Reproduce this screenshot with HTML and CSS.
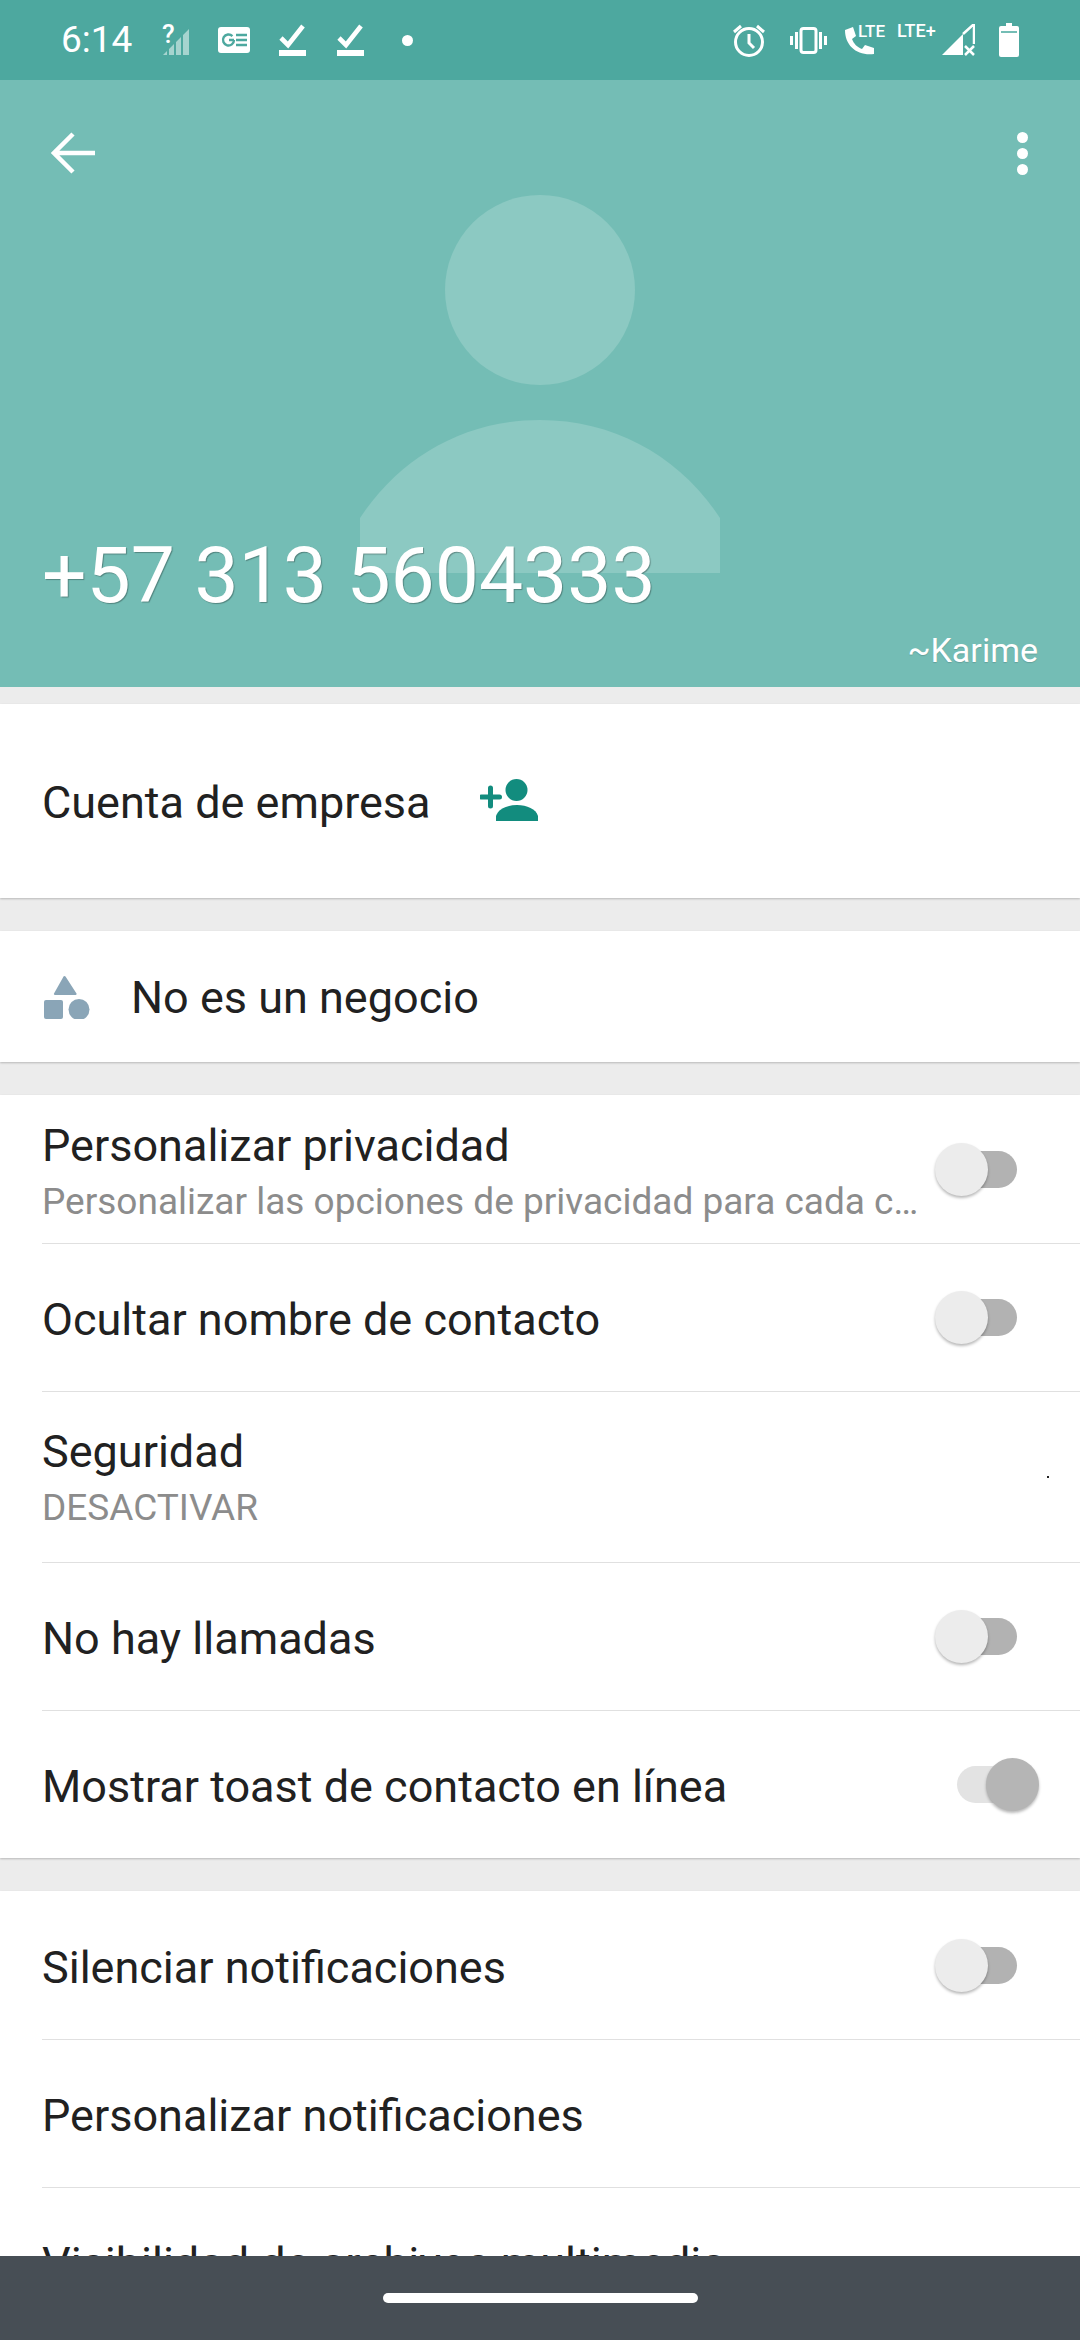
FILE: index.html
```html
<!DOCTYPE html>
<html lang="es">
<head>
<meta charset="utf-8">
<title>Info de contacto</title>
<link rel="stylesheet" href="styles.css">
</head>
<body>
<div class="screen">
  <div class="statusbar">
    <span class="time">6:14</span>
    <svg class="i-sig" viewBox="0 -6 30 38"><text class="q" x="0" y="19">?</text><path class="dim" d="M1 31l4-4v4zM7 31v-6l5-5v11zM14 31V18l5-5v18zM21 31V11l6-6v26z"/></svg>
    <svg class="i-news" viewBox="0 0 32 26"><rect width="32" height="26" rx="3" fill="#fff"/><path d="M16 13a5.500 5.500 0 1 1-1.600-3.900" fill="none" stroke="#4da89f" stroke-width="2.400"/><path d="M11 13h5M18 8h11M18 13h11M18 18h11" stroke="#4da89f" stroke-width="2.400" fill="none"/></svg>
    <svg class="i-chk" viewBox="0 0 27 32"><path d="M2 14l7 7L24 2" fill="none" stroke="#fff" stroke-width="4.600"/><rect y="26" width="27" height="6" fill="#fff"/></svg>
    <svg class="i-chk i-chk2" viewBox="0 0 27 32"><path d="M2 14l7 7L24 2" fill="none" stroke="#fff" stroke-width="4.600"/><rect y="26" width="27" height="6" fill="#fff"/></svg>
    <span class="dot"></span>
    <span class="status-spacer"></span>
    <svg class="i-alarm" viewBox="0 0 32 34"><circle cx="16" cy="19" r="13.500" fill="none" stroke="#fff" stroke-width="3"/><path d="M16 11v9l5 5M1 9l7-6M31 9l-7-6" fill="none" stroke="#fff" stroke-width="3"/></svg>
    <svg class="i-vib" viewBox="0 0 37 27"><rect x="11" y="1.500" width="15" height="24" rx="2.500" fill="none" stroke="#fff" stroke-width="3"/><path d="M6.500 5v17M1.500 9v9M30.500 5v17M35.500 9v9" stroke="#fff" stroke-width="3" fill="none"/></svg>
    <svg class="i-call" viewBox="0 -4 44 36"><path d="M1 6l8-3 3 9-4 3c2 5 5 8 10 10l3-4 9 3v6C13 32 1 22 1 6z" fill="#fff"/><text class="lte" x="14" y="13">LTE</text></svg>
    <svg class="i-lte" viewBox="0 -4 44 24"><text class="lte2" x="0" y="14">LTE+</text></svg>
    <svg class="i-net" viewBox="0 0 33 32"><path d="M0 31L21 10v21z" fill="#fff"/><path d="M21 10L32 0v20" fill="none" stroke="#fff" stroke-width="2.500"/><path d="M23 22l9 9M32 22l-9 9" stroke="#fff" stroke-width="2.500"/></svg>
    <svg class="i-bat" viewBox="0 0 20 34"><path d="M7 0h6v3h5a2 2 0 0 1 2 2v27a2 2 0 0 1-2 2H2a2 2 0 0 1-2-2V5a2 2 0 0 1 2-2h5z" fill="#fff"/><rect x="2" y="8" width="16" height="2" fill="#74bdb5"/></svg>
  </div>

  <div class="content">
    <header class="hero">
      <svg class="avatar" viewBox="0 0 360 378"><circle cx="180" cy="95" r="95"/><path d="M0 378V323C40 262 105 225 180 225S320 262 360 323V378z"/></svg>
      <div class="topbar">
        <svg class="back" viewBox="0 0 44 42"><path d="M22 2L3 21l19 19M3 21h41" fill="none" stroke="#fff" stroke-width="4.500"/></svg>
        <div class="kebab"><span></span><span></span><span></span></div>
      </div>
      <h1 class="phone">+57 313 5604333</h1>
      <div class="alias">~Karime</div>
    </header>

    <section class="card card-first card-business">
      <span class="label">Cuenta de empresa</span>
      <svg class="addp" viewBox="0 0 58 42"><path d="M10.500 9v18M1.500 18h18" stroke="#128c7e" stroke-width="5" stroke-linecap="round" fill="none"/><circle cx="36.500" cy="11" r="11" fill="#128c7e"/><path d="M16 42v-5c2-7 11-11 21-11s19 4 21 11v5z" fill="#128c7e"/></svg>
    </section>

    <section class="card card-biz">
      <svg class="shapes" viewBox="0 0 46 44"><path d="M21.500 1.500l11 17a1 1 0 0 1-1 1.500H11a1 1 0 0 1-1-1.500l9-16a1.500 1.500 0 0 1 2.500-1z" fill="#8aa5b7"/><rect y="25" width="19" height="19" rx="2" fill="#8aa5b7"/><circle cx="35" cy="34.500" r="10.500" fill="#8aa5b7"/></svg>
      <span class="label">No es un negocio</span>
    </section>

    <section class="card">
      <div class="row row-two row-first">
        <div class="texts">
          <div class="label">Personalizar privacidad</div>
          <div class="sub">Personalizar las opciones de privacidad para cada contacto</div>
        </div>
        <div class="toggle"><span class="track"></span><span class="thumb"></span></div>
      </div>
      <div class="row">
        <div class="texts"><div class="label">Ocultar nombre de contacto</div></div>
        <div class="toggle"><span class="track"></span><span class="thumb"></span></div>
      </div>
      <div class="row row-sec">
        <div class="texts">
          <div class="label">Seguridad</div>
          <div class="sub">DESACTIVAR</div>
        </div>
        <span class="speck"></span>
      </div>
      <div class="row">
        <div class="texts"><div class="label">No hay llamadas</div></div>
        <div class="toggle"><span class="track"></span><span class="thumb"></span></div>
      </div>
      <div class="row">
        <div class="texts"><div class="label">Mostrar toast de contacto en línea</div></div>
        <div class="toggle on"><span class="track"></span><span class="thumb"></span></div>
      </div>
    </section>

    <section class="card">
      <div class="row row-first">
        <div class="texts"><div class="label">Silenciar notificaciones</div></div>
        <div class="toggle"><span class="track"></span><span class="thumb"></span></div>
      </div>
      <div class="row">
        <div class="texts"><div class="label">Personalizar notificaciones</div></div>
      </div>
      <div class="row">
        <div class="texts"><div class="label">Visibilidad de archivos multimedia</div></div>
      </div>
    </section>
  </div>

  <div class="navbar"><span class="pill"></span></div>
</div>
</body>
</html>
```

FILE: styles.css
```css
* { box-sizing: border-box; }
html, body { margin: 0; padding: 0; }
body { font-family: Roboto, "Noto Sans", sans-serif; background: #ececec; color: #212121; }
.screen { width: 1080px; height: 2340px; display: flex; flex-direction: column; overflow: hidden; }

.statusbar { height: 80px; flex: none; background: #4da89f; display: flex; align-items: center; padding: 0 61px 0 61px; color: #fff; }
.statusbar svg { display: block; flex: none; }
.time { font-size: 37px; width: 72px; line-height: 80px; }
.q { font: 500 26px Roboto, sans-serif; fill: #fff; }
.dim { fill: #fff; opacity: .5; }
.i-sig { width: 30px; height: 38px; margin-left: 29px; margin-top: -6px; }
.i-news { width: 32px; height: 26px; margin-left: 26px; }
.i-chk { width: 27px; height: 32px; margin-left: 29px; }
.i-chk2 { margin-left: 31px; }
.dot { width: 11px; height: 11px; border-radius: 50%; background: #fff; margin-left: 38px; }
.status-spacer { flex: 1; }
.i-alarm { width: 32px; height: 34px; }
.i-vib { width: 37px; height: 27px; margin-left: 25px; }
.i-call { width: 44px; height: 36px; margin-left: 17px; margin-top: -4px; }
.lte { font: 500 17px Roboto, sans-serif; fill: #fff; }
.lte2 { font: 500 18px Roboto, sans-serif; fill: #fff; }
.i-lte { width: 44px; height: 24px; margin-left: 9px; margin-top: -18px; }
.i-net { width: 33px; height: 32px; margin-left: 1px; }
.i-bat { width: 20px; height: 34px; margin-left: 24px; }

.content { flex: 1; min-height: 0; overflow: hidden; }

.hero { position: relative; height: 607px; background: #74bdb5; color: #fff; padding: 0 42px; display: flex; flex-direction: column; }
.avatar { position: absolute; left: 360px; top: 115px; width: 360px; height: 378px; fill: #8cc9c2; }
.topbar { position: relative; display: flex; justify-content: space-between; align-items: center; height: 44px; margin-top: 51px; padding: 0 0 0 9px; }
.back { width: 44px; height: 42px; display: block; }
.kebab { display: flex; flex-direction: column; gap: 5px; margin-right: 10px; }
.kebab span { width: 11px; height: 11px; border-radius: 50%; background: #fff; }
.phone { position: relative; margin: 355px 0 0; font-size: 78.6px; font-weight: 400; line-height: 90px; text-shadow: 1px 1px 1px rgba(0,0,0,.3); white-space: nowrap; }
.alias { position: relative; align-self: flex-end; font-size: 34px; line-height: 38px; margin-top: 11px; text-shadow: 0 1px 1px rgba(0,0,0,.15); }

.card { background: #fff; margin-top: 33px; box-shadow: 0 1px 2px rgba(0,0,0,.22); }
.card-first { margin-top: 17px; }
.label { font-size: 45px; line-height: 50px; white-space: nowrap; color: #212121; }
.card-business { height: 194px; display: flex; align-items: center; padding-left: 42px; padding-top: 3px; gap: 49px; }
.addp { width: 58px; height: 42px; display: block; margin-top: -5px; }
.card-biz { height: 131px; display: flex; align-items: center; padding-left: 44px; padding-top: 3px; gap: 41px; }
.shapes { width: 46px; height: 44px; display: block; margin-top: -3px; }

.row { margin-left: 42px; min-height: 148px; display: flex; align-items: center; padding-right: 41px; border-top: 1px solid #e0e0e0; }
.row-first { border-top: 0; }
.row-sec { min-height: 171px; }
.texts { flex: 1; min-width: 0; margin-top: 5px; }
.sub { font-size: 37px; line-height: 40px; margin-top: 11px; color: #8c8c8c; width: 878px; white-space: nowrap; overflow: hidden; text-overflow: ellipsis; }
.row-two .texts { margin-top: 4px; }
.row-sec .texts { margin-top: 0; }
.speck { flex: none; width: 2px; height: 2px; background: #222; margin-right: -10px; margin-left: 8px; }

.toggle { position: relative; flex: none; width: 104px; height: 53px; margin-left: -104px; }
.track { position: absolute; left: 22px; right: 22px; top: 8px; bottom: 8px; border-radius: 19px; background: #b2b2b2; }
.thumb { position: absolute; left: 0; top: 0; width: 53px; height: 53px; border-radius: 50%; background: #ececec; box-shadow: 0 2px 3px rgba(0,0,0,.28); }
.toggle.on .track { background: #e3e3e3; }
.toggle.on .thumb { left: 51px; background: #b5b5b5; }

.navbar { height: 84px; flex: none; background: #474e55; display: flex; justify-content: center; padding-top: 37px; position: relative; }
.pill { width: 315px; height: 10px; border-radius: 5px; background: #fff; }
```
